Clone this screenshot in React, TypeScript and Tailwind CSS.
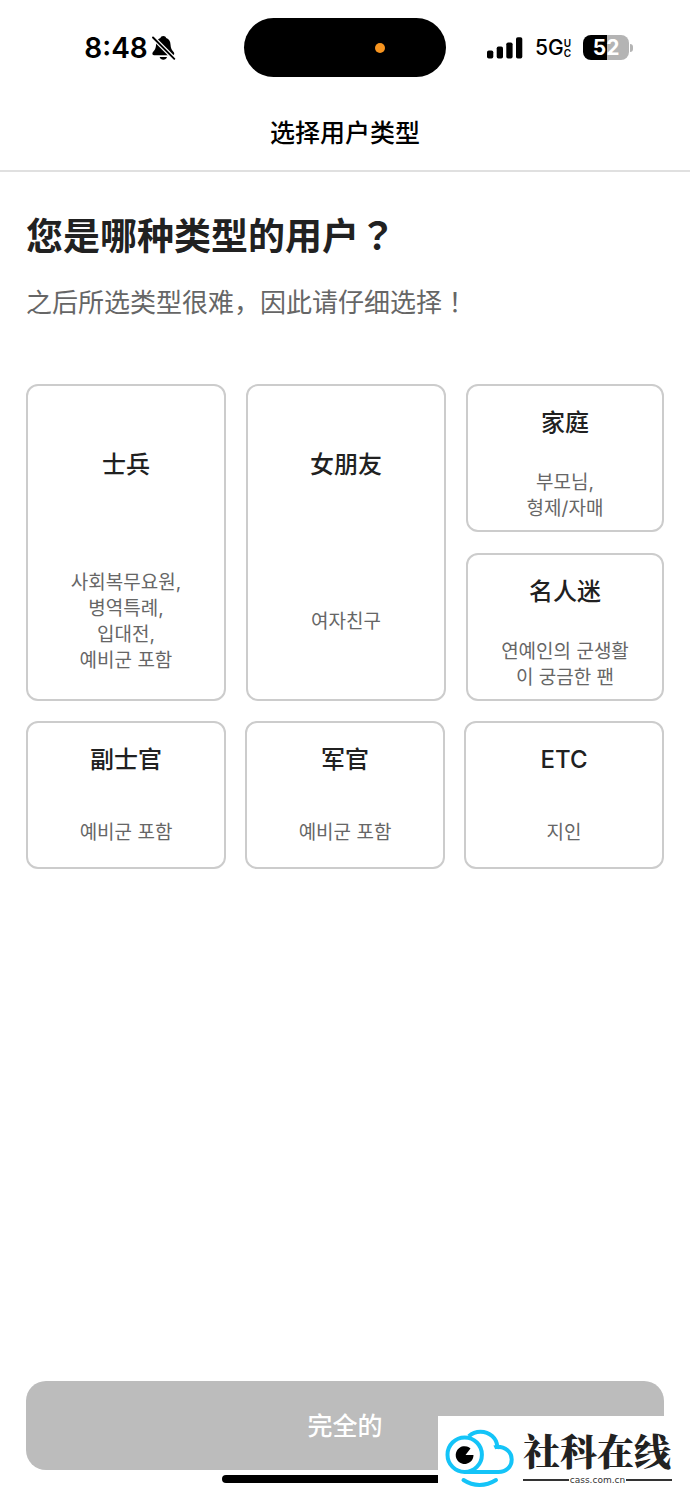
import { FC, useState } from 'react'

interface IUserType {
	id: string
	title: string
	description: string
}

const topTypes: IUserType[] = [
	{
		id: 'soldier',
		title: '士兵',
		description: '사회복무요원,\n병역특례,\n입대전,\n예비군 포함',
	},
	{ id: 'girlfriend', title: '女朋友', description: '여자친구' },
]

const sideTypes: IUserType[] = [
	{ id: 'family', title: '家庭', description: '부모님,\n형제/자매' },
	{ id: 'fan', title: '名人迷', description: '연예인의 군생활\n이 궁금한 팬' },
]

const bottomTypes: IUserType[] = [
	{ id: 'nco', title: '副士官', description: '예비군 포함' },
	{ id: 'officer', title: '军官', description: '예비군 포함' },
	{ id: 'etc', title: 'ETC', description: '지인' },
]

const BellOffIcon: FC = () => (
	<svg width="24" height="24" viewBox="0 0 24 24" aria-hidden="true">
		<path
			d="M11.300 0c-1.500 0-2.600.8-2.900 2C5.500 3 4.200 5.500 4.100 8.500 3.900 12.500 2.800 14 1 16c-1.100 1.200-.7 3.300 1 3.300h18.600c1.700 0 2.100-2.100 1-3.300-1.800-2-2.900-3.500-3.100-7.500-.1-3-1.400-5.500-4.300-6.500C13.900.8 12.800 0 11.300 0z"
			fill="#000"
		/>
		<path d="M7.600 21h7.400c-.5 1.800-2 2.700-3.700 2.700S8.100 22.800 7.600 21z" fill="#000" />
		<path d="M0 0.500L22.500 23" stroke="#fff" strokeWidth="4.400" />
		<path
			d="M1 1.500L22.300 22.800"
			stroke="#000"
			strokeWidth="1.900"
			strokeLinecap="round"
		/>
	</svg>
)

const SignalIcon: FC = () => (
	<svg width="36" height="22" viewBox="0 0 36 22" aria-hidden="true">
		<rect x="0" y="13.500" width="6.300" height="8" rx="1.800" />
		<rect x="9.700" y="9.500" width="6.300" height="12" rx="1.800" />
		<rect x="19.300" y="5.500" width="6.300" height="16" rx="1.800" />
		<rect x="29" y="0.300" width="6.300" height="21.200" rx="1.800" />
	</svg>
)

const CloudLogo: FC = () => (
	<svg
		className="mt-1"
		width="70"
		height="60"
		viewBox="0 0 70 60"
		fill="none"
		stroke="#14c4f8"
		strokeWidth="4"
		aria-hidden="true"
	>
		<circle cx="19.700" cy="26.700" r="17.200" />
		<path d="M23.800 8.200C27.500 4.800 31.500 3.700 35.500 3.700c9 0 16.500 6.500 16.800 15.300-1.200-.1-2.200 0-3 .4" />
		<path d="M51.500 18.700c9-.3 15.200 5.300 15.200 12.700S61 44 53.500 44H19.700" />
		<path d="M18.500 52c10 6.600 22 6.600 32.500 0" strokeLinecap="round" />
		<path
			d="M20.500 27h8a8.900 8.900 0 1 1-3-6.600z"
			fill="#000"
			stroke="none"
		/>
	</svg>
)

const StatusBar: FC = () => (
	<div className="grid grid-cols-[1fr_202px_1fr] items-center h-[95px] font-['Inter',sans-serif] text-black">
		<div className="flex items-center justify-center gap-1 pl-4">
			<span className="text-[28px] leading-8 font-semibold">8:48</span>
			<BellOffIcon />
		</div>
		<div className="flex items-center justify-end h-[59px] pr-[61px] rounded-full bg-black">
			<span className="size-[10px] rounded-full bg-[#f7941f]" />
		</div>
		<div className="flex items-center justify-center gap-3 pr-4">
			<SignalIcon />
			<div className="flex items-center">
				<span className="text-[21px] leading-6 font-medium">5G</span>
				<span className="flex flex-col text-[10px] leading-[10px] font-semibold">
					<span>U</span>
					<span>C</span>
				</span>
			</div>
			<div className="flex items-center gap-px">
				<span className="flex items-center justify-center w-[46px] h-[25px] rounded-lg bg-linear-to-r from-black from-52% to-[#b4b4b4] to-52% text-[21px] font-bold text-white">
					52
				</span>
				<span className="w-[3px] h-2 rounded-r-full bg-[#b4b4b4]" />
			</div>
		</div>
	</div>
)

interface ITypeCard {
	type: IUserType
	selected: boolean
	onSelect: (id: string) => void
}

const TypeCard: FC<ITypeCard> = ({ type, selected, onSelect }) => (
	<button
		type="button"
		aria-pressed={selected}
		onClick={() => onSelect(type.id)}
		className={`flex flex-col flex-1 min-h-[148px] border-2 rounded-xl text-center cursor-pointer ${
			selected ? 'border-[#212121]' : 'border-[#cccccc]'
		}`}
	>
		<span className="flex flex-1 items-center justify-center w-full pt-[2px] text-[24px] leading-8 font-medium text-[#212121]">
			{type.title}
		</span>
		<span className="flex flex-1 items-center justify-center w-full pt-1 text-[19px] leading-[26px] whitespace-pre-line font-normal text-[#666666]">
			{type.description}
		</span>
	</button>
)

const App: FC = () => {
	const [selected, setSelected] = useState<string>('')

	const renderCard = (type: IUserType) => (
		<TypeCard
			key={type.id}
			type={type}
			selected={selected === type.id}
			onSelect={setSelected}
		/>
	)

	return (
		<div className="relative flex flex-col min-h-screen bg-white font-['Inter','Noto_Sans_CJK_SC','Noto_Sans_CJK_KR',sans-serif]">
			<StatusBar />
			<header className="flex items-center justify-center h-[77px] border-b-2 border-[#e0e0e0]">
				<h1 className="text-[25px] leading-8 font-medium text-black">
					选择用户类型
				</h1>
			</header>

			<main className="flex flex-col px-[26px] pt-10">
				<h2 className="text-[37px] leading-[44px] font-bold text-[#212121]">
					您是哪种类型的用户
					<span className="font-['Noto_Sans_CJK_TC',sans-serif]">？</span>
				</h2>
				<p className="mt-6 text-[26px] leading-9 font-normal text-[#666666]">
					之后所选类型很难，因此请仔细选择
					<span className="font-['Noto_Sans_CJK_TC',sans-serif]">！</span>
				</p>

				<div className="grid grid-cols-[1fr_1fr_198px] gap-5 mt-[63px]">
					{topTypes.map((type) => (
						<div key={type.id} className="flex">
							{renderCard(type)}
						</div>
					))}
					<div className="flex flex-col gap-[21px]">
						{sideTypes.map(renderCard)}
					</div>
				</div>
				<div className="flex gap-[19px] mt-5">
					{bottomTypes.map(renderCard)}
				</div>
			</main>

			<footer className="flex flex-col items-center mt-auto px-[26px] pb-[13px]">
				<button
					type="button"
					className="w-full h-[89px] pt-[2px] rounded-[20px] bg-[#bcbcbc] text-[25px] font-medium text-white"
				>
					完全的
				</button>
				<div className="w-[246px] h-2 mt-[5px] rounded-full bg-black" />
			</footer>

			<div className="absolute right-0 bottom-0 flex items-center gap-2 w-[252px] h-20 pl-[7px] bg-white">
				<CloudLogo />
				<div className="flex flex-col w-[149px]">
					<span className="text-[37px] leading-[48px] font-black text-[#222222] font-['Noto_Serif_CJK_SC','Noto_Sans_CJK_SC',serif]">
						社科在线
					</span>
					<span className="flex items-center gap-px text-[9px] leading-3 text-[#333333] font-['DejaVu_Sans',sans-serif]">
						<span className="flex-1 h-[2px] bg-[#333333]" />
						cass.com.cn
						<span className="flex-1 h-[2px] bg-[#333333]" />
					</span>
				</div>
			</div>
		</div>
	)
}

export default App
